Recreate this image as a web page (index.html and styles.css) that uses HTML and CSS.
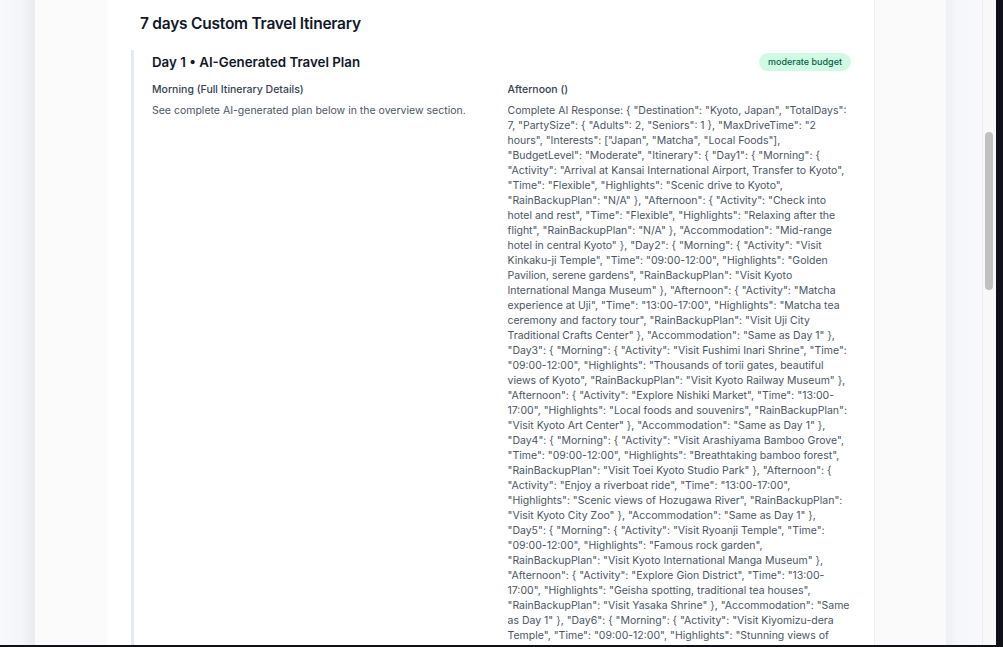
FILE: index.html
```html
<!DOCTYPE html>
<html lang="en">
<head>
<meta charset="utf-8">
<title>7 days Custom Travel Itinerary</title>
<link rel="stylesheet" href="styles.css">
</head>
<body>
<div class="screen">
  <div class="row">
    <div class="edge-left"></div>
    <div class="pane-left"></div>
    <main class="card">
      <h1 class="title">7 days Custom Travel Itinerary</h1>
      <section class="day">
        <div class="day-head">
          <h2 class="day-title">Day 1 • AI-Generated Travel Plan</h2>
          <span class="badge">moderate budget</span>
        </div>
        <div class="cols">
          <div class="col">
            <h3 class="slot">Morning (Full Itinerary Details)</h3>
            <p class="desc">See complete AI-generated plan below in the overview section.</p>
          </div>
          <div class="col">
            <h3 class="slot">Afternoon ()</h3>
            <p class="desc">Complete AI Response: { "Destination": "Kyoto, Japan", "TotalDays": 7, "PartySize": { "Adults": 2, "Seniors": 1 }, "MaxDriveTime": "2 hours", "Interests": ["Japan", "Matcha", "Local Foods"], "BudgetLevel": "Moderate", "Itinerary": { "Day1": { "Morning": { "Activity": "Arrival at Kansai International Airport, Transfer to Kyoto", "Time": "Flexible", "Highlights": "Scenic drive to Kyoto", "RainBackupPlan": "N/A" }, "Afternoon": { "Activity": "Check into hotel and rest", "Time": "Flexible", "Highlights": "Relaxing after the flight", "RainBackupPlan": "N/A" }, "Accommodation": "Mid-range hotel in central Kyoto" }, "Day2": { "Morning": { "Activity": "Visit Kinkaku-ji Temple", "Time": "09:00-12:00", "Highlights": "Golden Pavilion, serene gardens", "RainBackupPlan": "Visit Kyoto International Manga Museum" }, "Afternoon": { "Activity": "Matcha experience at Uji", "Time": "13:00-17:00", "Highlights": "Matcha tea ceremony and factory tour", "RainBackupPlan": "Visit Uji City Traditional Crafts Center" }, "Accommodation": "Same as Day 1" }, "Day3": { "Morning": { "Activity": "Visit Fushimi Inari Shrine", "Time": "09:00-12:00", "Highlights": "Thousands of torii gates, beautiful views of Kyoto", "RainBackupPlan": "Visit Kyoto Railway Museum" }, "Afternoon": { "Activity": "Explore Nishiki Market", "Time": "13:00-17:00", "Highlights": "Local foods and souvenirs", "RainBackupPlan": "Visit Kyoto Art Center" }, "Accommodation": "Same as Day 1" }, "Day4": { "Morning": { "Activity": "Visit Arashiyama Bamboo Grove", "Time": "09:00-12:00", "Highlights": "Breathtaking bamboo forest", "RainBackupPlan": "Visit Toei Kyoto Studio Park" }, "Afternoon": { "Activity": "Enjoy a riverboat ride", "Time": "13:00-17:00", "Highlights": "Scenic views of Hozugawa River", "RainBackupPlan": "Visit Kyoto City Zoo" }, "Accommodation": "Same as Day 1" }, "Day5": { "Morning": { "Activity": "Visit Ryoanji Temple", "Time": "09:00-12:00", "Highlights": "Famous rock garden", "RainBackupPlan": "Visit Kyoto International Manga Museum" }, "Afternoon": { "Activity": "Explore Gion District", "Time": "13:00-17:00", "Highlights": "Geisha spotting, traditional tea houses", "RainBackupPlan": "Visit Yasaka Shrine" }, "Accommodation": "Same as Day 1" }, "Day6": { "Morning": { "Activity": "Visit Kiyomizu-dera Temple", "Time": "09:00-12:00", "Highlights": "Stunning views of Kyoto", "RainBackupPlan": "Visit Kyoto National Museum" } } } }</p>
          </div>
        </div>
      </section>
    </main>
    <div class="pane-right"></div>
    <div class="edge-right"></div>
    <div class="scrollbar"><div class="thumb"></div></div>
    <div class="frame"></div>
  </div>
  <div class="bottom"></div>
</div>
</body>
</html>
```

FILE: styles.css
```css
* { box-sizing: border-box; }
html, body { margin: 0; padding: 0; }
body {
  width: 1003px;
  height: 647px;
  overflow: hidden;
  font-family: Inter, "Liberation Sans", sans-serif;
  background: #ffffff;
}
.screen { display: flex; flex-direction: column; height: 647px; }
.row { display: flex; height: 645px; overflow: hidden; }
.bottom { height: 2px; background: #0f1117; }

.edge-left {
  width: 35px; flex: none;
  background: linear-gradient(to right, #f7f9fc 0%, #f3f5f8 60%, #e9ebef 100%);
}
.pane-left { width: 72px; flex: none; background: #fbfbfb; }
.card {
  width: 768px; flex: none;
  background: #ffffff;
  border-right: 1px solid #f0f0f0;
  padding: 14px 23px 0 24px;
}
.pane-right { width: 71px; flex: none; background: #fafafa; }
.edge-right {
  width: 36px; flex: none;
  background: linear-gradient(to right, #eceff3 0%, #f4f6fa 30%, #f7f9fd 100%);
}
.scrollbar {
  width: 14px; flex: none;
  background: #f8f8f8;
  border-left: 1px solid #ececec;
  padding-top: 132px;
  padding-left: 2px;
}
.thumb { width: 8px; height: 158px; border-radius: 4px; background: #c1c1c1; }
.frame { width: 7px; flex: none; background: #0f1117; }

.title {
  margin: 0 0 16px 9px;
  font-size: 15.5px;
  font-weight: 600;
  line-height: 20px;
  color: #111827;
  letter-spacing: -0.015em;
}
.day {
  border-left: 3px solid #e3eaf0;
  padding: 2px 0 0 18px;
  min-height: 700px;
}
.day-head {
  display: flex;
  justify-content: space-between;
  align-items: center;
  height: 20px;
  margin-bottom: 10px;
}
.day-title {
  margin: 0;
  font-size: 13.3px;
  font-weight: 600;
  color: #111827;
}
.badge {
  background: #d1fae5;
  color: #065f46;
  font-size: 9px;
  font-weight: 500;
  line-height: 18px;
  padding: 0 9px;
  border-radius: 9px;
}
.cols {
  display: grid;
  grid-template-columns: 1fr 1fr;
  column-gap: 12px;
}
.slot {
  margin: 0 0 6px;
  font-size: 10.5px;
  font-weight: 500;
  line-height: 15px;
  color: #374151;
}
.desc {
  margin: 0;
  font-size: 10.5px;
  line-height: 15px;
  color: #4b5563;
}
```
